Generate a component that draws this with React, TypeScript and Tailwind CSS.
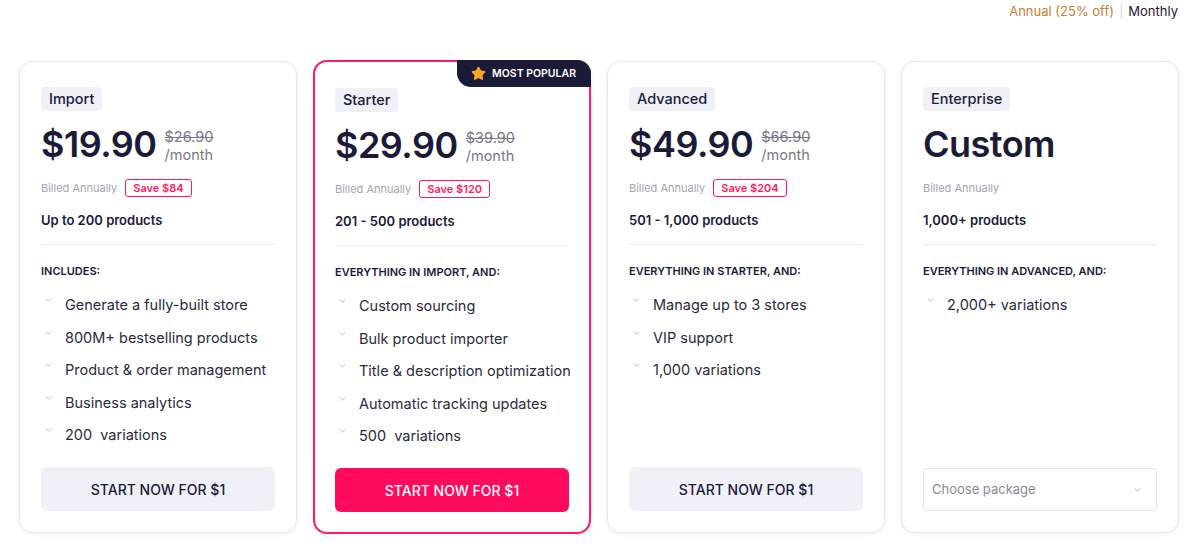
import { Star } from 'lucide-react'

type Plan = {
  name: string
  price: string
  old?: string
  save?: string
  products: string
  heading: string
  features: string[]
  popular?: boolean
  custom?: boolean
}

const plans: Plan[] = [
  {
    name: 'Import',
    price: '$19.90',
    old: '$26.90',
    save: 'Save $84',
    products: 'Up to 200 products',
    heading: 'INCLUDES:',
    features: [
      'Generate a fully-built store',
      '800M+ bestselling products',
      'Product & order management',
      'Business analytics',
      '200  variations',
    ],
  },
  {
    name: 'Starter',
    price: '$29.90',
    old: '$39.90',
    save: 'Save $120',
    products: '201 - 500 products',
    heading: 'EVERYTHING IN IMPORT, AND:',
    features: [
      'Custom sourcing',
      'Bulk product importer',
      'Title & description optimization',
      'Automatic tracking updates',
      '500  variations',
    ],
    popular: true,
  },
  {
    name: 'Advanced',
    price: '$49.90',
    old: '$66.90',
    save: 'Save $204',
    products: '501 - 1,000 products',
    heading: 'EVERYTHING IN STARTER, AND:',
    features: ['Manage up to 3 stores', 'VIP support', '1,000 variations'],
  },
  {
    name: 'Enterprise',
    price: 'Custom',
    products: '1,000+ products',
    heading: 'EVERYTHING IN ADVANCED, AND:',
    features: ['2,000+ variations'],
    custom: true,
  },
]

function Chevron({ className }: { className?: string }) {
  return (
    <svg viewBox="0 0 8 5" className={className} fill="none" stroke="currentColor" strokeWidth="1" strokeLinecap="round">
      <path d="M1 1l3 3 3-3" />
    </svg>
  )
}

function PlanCard({ plan }: { plan: Plan }) {
  return (
    <div
      className={`relative flex flex-col rounded-[14px] bg-white shadow-[0_1px_4px_rgba(20,20,60,0.08)] ${
        plan.popular
          ? '-my-px border-2 border-[#ff1a62] px-[20px] pb-[20px] pt-[26px]'
          : 'border border-[#e8e8ee] px-[21px] pb-[21px] pt-[25px]'
      }`}
    >
      {plan.popular && (
        <div className="absolute -right-[2px] -top-[2px] flex h-[27px] items-center gap-[6px] rounded-bl-[14px] rounded-tr-[14px] bg-[#1b1b38] pl-[14px] pr-[15px] text-[10.5px] font-semibold text-white">
          <Star size={15} className="fill-[#f5a623] text-[#f5a623]" />
          MOST POPULAR
        </div>
      )}

      {/* TAG */}
      <div className="self-start rounded-[4px] bg-[#f0f0f8] px-[8px] py-[3px] text-[14.5px] font-medium leading-[18px] text-[#1b1b38]">
        {plan.name}
      </div>

      {/* PRICE */}
      <div className="mt-[13px] flex h-[40px] items-center gap-[8px]">
        <div className="text-[36px] font-semibold leading-none tracking-[-0.5px] text-[#1b1b38]">
          {plan.price}
        </div>
        {plan.old && (
          <div className="mt-[4px] flex flex-col text-[14.5px] leading-[18px] text-[#77778a]">
            <span className="line-through">{plan.old}</span>
            <span>/month</span>
          </div>
        )}
      </div>

      <div className="mt-[15px] flex h-[18px] items-center gap-[8px]">
        <span className="text-[11px] text-[#a4a4b4]">Billed Annually</span>
        {plan.save && (
          <span className="rounded-[3px] border border-[#ff1a62] px-[7px] text-[11px] font-semibold leading-[16px] text-[#ff1a62]">
            {plan.save}
          </span>
        )}
      </div>

      <div className="mt-[14px] text-[13px] font-semibold leading-[18px] text-[#1b1b38]">{plan.products}</div>

      <div className="mt-[15px] h-px bg-[#ebebf0]" />

      <div className="mt-[19px] text-[11px] font-semibold leading-[14px] text-[#1b1b38]">{plan.heading}</div>

      <ul className="mt-[17px] flex flex-1 flex-col gap-[12.5px]">
        {plan.features.map((f) => (
          <li key={f} className="flex h-[20px] items-center whitespace-pre text-[14.5px] text-[#2b2b40]">
            <Chevron className="mb-[10px] ml-[4px] mr-[13px] h-[4px] w-[7px] shrink-0 text-[#a8a8b4]" />
            {f}
          </li>
        ))}
      </ul>

      {plan.custom ? (
        <div className="flex h-[43px] items-center justify-between rounded-[4px] border border-[#e3e3ea] px-[8px] text-[13px] text-[#8a8a96]">
          Choose package
          <Chevron className="mr-[7px] h-[4px] w-[7px] text-[#9a9aa6]" />
        </div>
      ) : (
        <button
          className={`h-[44px] rounded-[6px] text-[14px] font-medium ${
            plan.popular ? 'bg-[#ff0a5c] text-white' : 'bg-[#f0f0f8] text-[#1b1b38]'
          }`}
        >
          START NOW FOR $1
        </button>
      )}
    </div>
  )
}

export default function App() {
  return (
    <main className="h-[554px] w-[1200px] bg-white font-['Inter',sans-serif]">
      <div className="flex justify-end pr-[22px] pt-[3px] text-[13px] leading-[16px]">
        <span className="text-[#c98033]">Annual (25% off)</span>
        <span className="mx-[5px] text-[#d8d8de]">|</span>
        <span className="text-[#1b1b38]">Monthly</span>
      </div>

      <div className="mt-[42px] grid h-[472px] grid-cols-4 gap-[16px] pl-[19px] pr-[21px]">
        {plans.map((p) => (
          <PlanCard key={p.name} plan={p} />
        ))}
      </div>
    </main>
  )
}
